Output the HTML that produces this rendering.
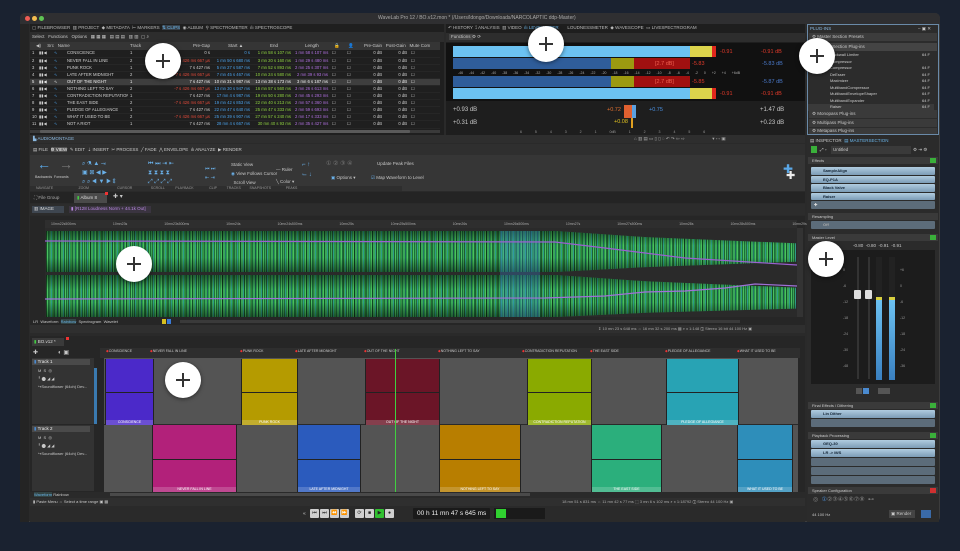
<!DOCTYPE html><html><head><meta charset="utf-8"><style>
*{margin:0;padding:0;box-sizing:border-box}
body{width:960px;height:551px;background:#1a2230;font-family:"Liberation Sans",sans-serif;color:#bbb;overflow:hidden;position:relative}
.a{position:absolute}
.t{position:absolute;font-size:4.5px;white-space:nowrap;color:#c8c8c8;line-height:6px}
.circ{position:absolute;width:36px;height:36px;border-radius:50%;background:#fff;box-shadow:0 1px 4px rgba(0,0,0,.5);z-index:9}
.circ:before{content:"";position:absolute;left:11px;top:17px;width:14px;height:1.5px;background:#333}
.circ:after{content:"";position:absolute;left:17.3px;top:11px;width:1.5px;height:14px;background:#333}
table{border-collapse:collapse;table-layout:fixed;position:absolute;left:30px;top:50px;width:410px;font-size:4.2px;color:#d0d0d0}
td{height:7.1px;padding:0 2px;white-space:nowrap;overflow:hidden;border-bottom:1px solid #262626;line-height:6px}
td.r{text-align:right}.rd{color:#e04a3a}.bl{color:#4aa0e8}.gr{color:#8ed040}.pu{color:#b070e0}
tr.sel td{background:#3e3e3e;color:#eee}
.slot{position:absolute;left:811px;width:124px;height:7.5px;background:linear-gradient(#b0cce0,#7c9cb6);border-radius:1px;font-size:4px;line-height:7.5px;color:#123;padding-left:12px;font-weight:bold}
.slot.e{background:#5c6c7a}
.hdr{position:absolute;left:808px;width:130px;height:7px;background:#3a3a3a;font-size:4px;line-height:7px;color:#ccc;padding-left:4px}
.gb{position:absolute;right:2px;top:1px;width:6px;height:5px;background:#3ab03a}
.pl{position:absolute;left:808px;width:126px;height:6.5px;font-size:4px;line-height:6.5px;color:#ccc;padding-left:22px}
.cl{position:absolute;border-left:1px solid #222;border-right:1px solid #222}
.cl b{position:absolute;left:0;right:0;top:50%;height:1px;background:#222}
.cl i{position:absolute;left:0;right:0;bottom:0;height:5px;background:rgba(255,255,255,.18);font-style:normal;font-size:3.5px;color:#fff;text-align:center;line-height:5px}
.btn{position:absolute;top:509px;width:9px;height:9px;background:#cfcfcf;border-radius:1px;font-size:5px;color:#222;text-align:center;line-height:9px}
.wv{position:absolute;background:linear-gradient(180deg,rgba(0,0,0,.45),rgba(0,0,0,0) 35%,rgba(0,0,0,0) 65%,rgba(0,0,0,.45)),repeating-linear-gradient(90deg,rgba(0,0,0,.45) 0 1px,transparent 1px 3px,rgba(0,0,0,.25) 3px 4px,transparent 4px 7px,rgba(0,0,0,.35) 7px 8px,transparent 8px 11px),repeating-linear-gradient(90deg,#2a9a48 0 1px,#4cc060 1px 2px,#1b6e38 2px 3px,#3aa858 3px 5px,#2e9c8a 5px 6px)}
</style></head><body>
<div class="a" style="left:20px;top:13px;width:920px;height:509px;background:#2a2a2a;border-radius:5px;border:1px solid #3c3c3c"></div>
<div class="a" style="left:20px;top:13px;width:920px;height:11px;background:#2f2f31;border-radius:5px 5px 0 0"></div>
<div class="a" style="left:25px;top:16px;width:5px;height:5px;border-radius:50%;background:#ee5c54"></div>
<div class="a" style="left:32px;top:16px;width:5px;height:5px;border-radius:50%;background:#f4bd4f"></div>
<div class="a" style="left:39px;top:16px;width:5px;height:5px;border-radius:50%;background:#5fc454"></div>
<div class="t" style="left:378px;top:15px;font-size:5px;color:#aaa">WaveLab Pro 12 / BO.v12.mon * (/Users/ldongo/Downloads/NARCOLAPTIC ddp-Master)</div>
<div class="a" style="left:20px;top:24px;width:9px;height:498px;background:#242424"></div>

<div class="a" style="left:30px;top:24px;width:414px;height:111px;background:#1f1f1f"></div>
<div class="t" style="left:32px;top:25px;color:#bbb">▢ FILEBROWSER &nbsp;▥ PROJECT &nbsp;◆ METADATA &nbsp;⊢ MARKERS &nbsp;<span style="color:#6ab4e8;background:#38414a">⇅ CLIPS</span> &nbsp;◉ ALBUM &nbsp;⚲ SPECTROMETER &nbsp;ılı SPECTROSCOPE</div>
<div class="a" style="left:30px;top:32px;width:414px;height:10px;background:#2d2d2d"></div>
<div class="t" style="left:32px;top:34px">Select &nbsp; Functions &nbsp; Options &nbsp; ▦ ▦ ▦ &nbsp; ▤ ▤ ▤ &nbsp; ▥ ▥ &nbsp;▢ ⌕</div>
<div class="a" style="left:30px;top:42px;width:410px;height:8px;background:#353535"></div>
<div class="t" style="left:36px;top:43px">◀) &nbsp;&nbsp;&nbsp;&nbsp;Src &nbsp; Name</div>
<div class="t" style="left:130px;top:43px">Track</div><div class="t" style="left:193px;top:43px">Pre-Gap</div><div class="t" style="left:228px;top:43px">Start ▲</div><div class="t" style="left:270px;top:43px">End</div><div class="t" style="left:305px;top:43px">Length</div><div class="t" style="left:334px;top:43px">🔒 &nbsp;&nbsp;&nbsp;&nbsp;&nbsp;&nbsp;👤</div><div class="t" style="left:364px;top:43px">Pre-Gain &nbsp;&nbsp;Post-Gain &nbsp;&nbsp;Mute Com</div>
<table>
<colgroup><col style="width:7px"><col style="width:15px"><col style="width:13px"><col style="width:63px"><col style="width:14px"><col style="width:30px"><col style="width:40px"><col style="width:40px"><col style="width:41px"><col style="width:37px"><col style="width:15px"><col style="width:15px"><col style="width:24px"><col style="width:25px"><col style="width:16px"><col style="width:15px"></colgroup>
<tr><td>1</td><td>▮▮◀</td><td class="bl">∿</td><td>CONSCIENCE</td><td>1</td><td></td><td class="r">0 s</td><td class="r bl">0 s</td><td class="r gr">1 mn 58 s 107 ms</td><td class="r pu">1 mn 58 s 107 ms</td><td>☐</td><td>☐</td><td class="r">0 dB</td><td class="r">0 dB</td><td>☐</td><td></td></tr>
<tr><td>2</td><td>▮▮◀</td><td class="bl">∿</td><td>NEVER FALL IN LINE</td><td>2</td><td></td><td class="r rd">-7 s 426 ms 667 µs</td><td class="r bl">1 mn 50 s 680 ms</td><td class="r gr">3 mn 20 s 160 ms</td><td class="r pu">1 mn 29 s 480 ms</td><td>☐</td><td>☐</td><td class="r">0 dB</td><td class="r">0 dB</td><td>☐</td><td></td></tr>
<tr><td>3</td><td>▮▮◀</td><td class="bl">∿</td><td>PUNK ROCK</td><td>1</td><td></td><td class="r">7 s 427 ms</td><td class="r bl">5 mn 27 s 587 ms</td><td class="r gr">7 mn 52 s 893 ms</td><td class="r pu">2 mn 25 s 307 ms</td><td>☐</td><td>☐</td><td class="r">0 dB</td><td class="r">0 dB</td><td>☐</td><td></td></tr>
<tr><td>4</td><td>▮▮◀</td><td class="bl">∿</td><td>LATE AFTER MIDNIGHT</td><td>2</td><td></td><td class="r rd">-7 s 426 ms 667 µs</td><td class="r bl">7 mn 45 s 467 ms</td><td class="r gr">10 mn 24 s 580 ms</td><td class="r pu">2 mn 39 s 93 ms</td><td>☐</td><td>☐</td><td class="r">0 dB</td><td class="r">0 dB</td><td>☐</td><td></td></tr>
<tr class="sel"><td>5</td><td>▮▮◀</td><td class="bl">∿</td><td>OUT OF THE NIGHT</td><td>1</td><td></td><td class="r">7 s 427 ms</td><td class="r">10 mn 31 s 987 ms</td><td class="r">13 mn 38 s 173 ms</td><td class="r">3 mn 6 s 187 ms</td><td>☐</td><td>☐</td><td class="r">0 dB</td><td class="r">0 dB</td><td>☐</td><td></td></tr>
<tr><td>6</td><td>▮▮◀</td><td class="bl">∿</td><td>NOTHING LEFT TO SAY</td><td>2</td><td></td><td class="r rd">-7 s 426 ms 667 µs</td><td class="r bl">13 mn 30 s 947 ms</td><td class="r gr">16 mn 57 s 560 ms</td><td class="r pu">3 mn 26 s 613 ms</td><td>☐</td><td>☐</td><td class="r">0 dB</td><td class="r">0 dB</td><td>☐</td><td></td></tr>
<tr><td>7</td><td>▮▮◀</td><td class="bl">∿</td><td>CONTRADICTION REPUTATION</td><td>1</td><td></td><td class="r">7 s 427 ms</td><td class="r bl">17 mn 4 s 987 ms</td><td class="r gr">19 mn 50 s 280 ms</td><td class="r pu">2 mn 45 s 293 ms</td><td>☐</td><td>☐</td><td class="r">0 dB</td><td class="r">0 dB</td><td>☐</td><td></td></tr>
<tr><td>8</td><td>▮▮◀</td><td class="bl">∿</td><td>THE EAST SIDE</td><td>2</td><td></td><td class="r rd">-7 s 426 ms 667 µs</td><td class="r bl">19 mn 42 s 853 ms</td><td class="r gr">22 mn 40 s 213 ms</td><td class="r pu">2 mn 57 s 360 ms</td><td>☐</td><td>☐</td><td class="r">0 dB</td><td class="r">0 dB</td><td>☐</td><td></td></tr>
<tr><td>9</td><td>▮▮◀</td><td class="bl">∿</td><td>PLEDGE OF ALLEGIANCE</td><td>1</td><td></td><td class="r">7 s 427 ms</td><td class="r bl">22 mn 47 s 640 ms</td><td class="r gr">25 mn 47 s 333 ms</td><td class="r pu">2 mn 59 s 693 ms</td><td>☐</td><td>☐</td><td class="r">0 dB</td><td class="r">0 dB</td><td>☐</td><td></td></tr>
<tr><td>10</td><td>▮▮◀</td><td class="bl">∿</td><td>WHAT IT USED TO BE</td><td>2</td><td></td><td class="r rd">-7 s 426 ms 667 µs</td><td class="r bl">25 mn 39 s 907 ms</td><td class="r gr">27 mn 57 s 240 ms</td><td class="r pu">2 mn 17 s 333 ms</td><td>☐</td><td>☐</td><td class="r">0 dB</td><td class="r">0 dB</td><td>☐</td><td></td></tr>
<tr><td>11</td><td>▮▮◀</td><td class="bl">∿</td><td>NOT A RIOT</td><td>1</td><td></td><td class="r">7 s 427 ms</td><td class="r bl">28 mn 4 s 667 ms</td><td class="r gr">30 mn 40 s 93 ms</td><td class="r pu">2 mn 35 s 427 ms</td><td>☐</td><td>☐</td><td class="r">0 dB</td><td class="r">0 dB</td><td>☐</td><td></td></tr>
</table>
<div class="a" style="left:30px;top:130px;width:410px;height:3px;background:#3a3a3a"></div>
<div class="a" style="left:40px;top:130px;width:370px;height:3px;background:#5a5a5a;border-radius:1px"></div>

<div class="a" style="left:446px;top:24px;width:359px;height:111px;background:#1e1e1e"></div>
<div class="t" style="left:448px;top:25px;color:#bbb">↶ HISTORY &nbsp;⟟ ANALYSIS &nbsp;▥ VIDEO &nbsp;<span style="color:#6ab4e8">ılı LEVELMETER</span> &nbsp;&nbsp;&nbsp;&nbsp;&nbsp;&nbsp;LOUDNESSMETER &nbsp;◆ WAVESCOPE &nbsp;▭ LIVESPECTROGRAM</div>
<div class="a" style="left:446px;top:33px;width:359px;height:9px;background:#2d2d2d"></div>
<div class="t" style="left:449px;top:34px;background:#444;padding:0 2px">Functions</div><div class="t" style="left:472px;top:34px">⚙ ⟳</div>
<div class="a" style="left:446px;top:43px;width:359px;height:58px;background:#111"></div>
<div class="a" style="left:453px;top:46px;width:237px;height:11px;background:#6cc2f2"></div><div class="a" style="left:690px;top:46px;width:22px;height:11px;background:#dcd44c"></div><div class="a" style="left:712px;top:46px;width:4px;height:11px;background:#e0281c"></div>
<div class="a" style="left:453px;top:58px;width:158px;height:11px;background:#2f5d9a"></div><div class="a" style="left:611px;top:58px;width:23px;height:11px;background:#9c9a10"></div><div class="a" style="left:634px;top:58px;width:56px;height:11px;background:#a01010"></div>
<div class="a" style="left:453px;top:76px;width:158px;height:11px;background:#2f5d9a"></div><div class="a" style="left:611px;top:76px;width:23px;height:11px;background:#9c9a10"></div><div class="a" style="left:634px;top:76px;width:56px;height:11px;background:#a01010"></div>
<div class="a" style="left:453px;top:88px;width:237px;height:11px;background:#6cc2f2"></div><div class="a" style="left:690px;top:88px;width:22px;height:11px;background:#dcd44c"></div><div class="a" style="left:712px;top:88px;width:4px;height:11px;background:#e0281c"></div>
<div class="t" style="left:720px;top:49px;color:#e03a2a;font-size:5.5px">-0.91</div><div class="t" style="left:761px;top:49px;color:#e03a2a;font-size:5.5px">-0.91 dB</div>
<div class="t" style="left:655px;top:61px;color:#ee6050;font-size:5.5px">[2.7 dB]</div><div class="t" style="left:692px;top:61px;color:#e03a2a;font-size:5.5px">-5.83</div><div class="t" style="left:762px;top:61px;color:#4a78c8;font-size:5.5px">-5.83 dB</div>
<div class="t" style="left:655px;top:79px;color:#ee6050;font-size:5.5px">[2.7 dB]</div><div class="t" style="left:692px;top:79px;color:#e03a2a;font-size:5.5px">-5.85</div><div class="t" style="left:762px;top:79px;color:#4a78c8;font-size:5.5px">-5.87 dB</div>
<div class="t" style="left:720px;top:91px;color:#e03a2a;font-size:5.5px">-0.91</div><div class="t" style="left:761px;top:91px;color:#e03a2a;font-size:5.5px">-0.91 dB</div>
<div class="t" style="left:458px;top:70px;font-size:3.5px;color:#aaa;word-spacing:5px">-46 -44 -42 -40 -38 -36 -34 -32 -30 -28 -26 -24 -22 -20 -18 -16 -14 -12 -10 -8 -6 -4 -2 0 +2 +4 +6dB</div>
<div class="t" style="left:453px;top:107px;font-size:6px">+0.93 dB</div><div class="t" style="left:453px;top:120px;font-size:6px">+0.31 dB</div>
<div class="t" style="left:760px;top:107px;font-size:6px">+1.47 dB</div><div class="t" style="left:760px;top:120px;font-size:6px">+0.23 dB</div>
<div class="a" style="left:624px;top:105px;width:8px;height:13px;background:#e06030"></div><div class="a" style="left:632px;top:105px;width:4px;height:13px;background:#5aa0e0"></div><div class="a" style="left:631px;top:118px;width:2px;height:10px;background:#e0a020"></div>
<div class="t" style="left:607px;top:107px;color:#e07030;font-size:5.5px">+0.72</div><div class="t" style="left:649px;top:107px;color:#4a90e0;font-size:5.5px">+0.75</div><div class="t" style="left:614px;top:119px;color:#e0c020;font-size:5.5px">+0.08</div>
<div class="t" style="left:520px;top:129px;font-size:3.5px;color:#999;word-spacing:12px">6 5 4 3 2 1 0dB 1 2 3 4 5 6</div>

<div class="a" style="left:807px;top:24px;width:132px;height:111px;background:#2c2c2c;border:1px solid #6a8aa8"></div>
<div class="t" style="left:810px;top:26px;color:#8ab8e0">PLUG-INS</div><div class="t" style="left:918px;top:26px">– ▣ ✕</div>
<div class="a" style="left:809px;top:33px;width:128px;height:8px;background:#3c3c3c"></div><div class="t" style="left:812px;top:34px">⚙ Master Section Presets</div>
<div class="a" style="left:809px;top:43px;width:128px;height:8px;background:#444"></div><div class="t" style="left:812px;top:44px">⚙ Master Section Plug-ins</div>
<div class="pl" style="top:52px">Brickwall Limiter<span style="position:absolute;right:4px">64 F</span></div>
<div class="pl" style="top:58.5px">Compressor</div>
<div class="pl" style="top:65px">Compressor<span style="position:absolute;right:4px">64 F</span></div>
<div class="pl" style="top:71.5px">DeEsser<span style="position:absolute;right:4px">64 F</span></div>
<div class="pl" style="top:78px">Maximizer<span style="position:absolute;right:4px">64 F</span></div>
<div class="pl" style="top:84.5px">MultibandCompressor<span style="position:absolute;right:4px">64 F</span></div>
<div class="pl" style="top:91px">MultibandEnvelopeShaper<span style="position:absolute;right:4px">64 F</span></div>
<div class="pl" style="top:97.5px">MultibandExpander<span style="position:absolute;right:4px">64 F</span></div>
<div class="pl" style="top:104px;background:#3a3a3a">Raiser<span style="position:absolute;right:4px">64 F</span></div>
<div class="a" style="left:809px;top:110px;width:128px;height:8px;background:#3a3a3a"></div><div class="t" style="left:812px;top:111px">⚙ Monopass Plug-ins</div>
<div class="a" style="left:809px;top:119px;width:128px;height:8px;background:#3a3a3a"></div><div class="t" style="left:812px;top:120px">⚙ Multipass Plug-ins</div>
<div class="a" style="left:809px;top:128px;width:128px;height:6px;background:#3a3a3a"></div><div class="t" style="left:812px;top:128px">⚙ Metapass Plug-ins</div>

<div class="a" style="left:30px;top:135px;width:775px;height:8px;background:#2e2e2e"></div>
<div class="t" style="left:33px;top:136px;color:#8ab8e0">▙ AUDIOMONTAGE</div>
<div class="t" style="left:634px;top:136px;color:#aaa">⌂ ▥ ▤ ▭ ▯ ▯ ◌ ↶ ↷ ⇦ ⇨ &nbsp;&nbsp;&nbsp;&nbsp;&nbsp;&nbsp;&nbsp;&nbsp;&nbsp;&nbsp;&nbsp;&nbsp;&nbsp;&nbsp;&nbsp;&nbsp;&nbsp;&nbsp;&nbsp;&nbsp;&nbsp;▾ ▫ ▫ ▣</div>
<div class="a" style="left:30px;top:144px;width:775px;height:11px;background:#2f2f2f"></div>
<div class="t" style="left:33px;top:147px">▤ FILE &nbsp;<span style="background:#505050;color:#fff">⚙ VIEW</span> &nbsp;✎ EDIT &nbsp;⇣ INSERT &nbsp;✂ PROCESS &nbsp;╱ FADE &nbsp;⋀ ENVELOPE &nbsp;ılı ANALYZE &nbsp;▶ RENDER</div>
<div class="a" style="left:30px;top:155px;width:775px;height:36px;background:#363636"></div>
<div class="a" style="left:30px;top:186px;width:372px;height:5px;background:#2e2e2e"></div>
<div class="t" style="left:36px;top:185px;font-size:3.5px;color:#999">NAVIGATE &nbsp;&nbsp;&nbsp;&nbsp;&nbsp;&nbsp;&nbsp;&nbsp;&nbsp;&nbsp;&nbsp;&nbsp;&nbsp;&nbsp;&nbsp;&nbsp;&nbsp;&nbsp;&nbsp;&nbsp;&nbsp;&nbsp;&nbsp;&nbsp;&nbsp;ZOOM &nbsp;&nbsp;&nbsp;&nbsp;&nbsp;&nbsp;&nbsp;&nbsp;&nbsp;&nbsp;&nbsp;&nbsp;&nbsp;&nbsp;&nbsp;&nbsp;&nbsp;&nbsp;&nbsp;&nbsp;&nbsp;&nbsp;&nbsp;&nbsp;&nbsp;&nbsp;&nbsp;&nbsp;CURSOR &nbsp;&nbsp;&nbsp;&nbsp;&nbsp;&nbsp;&nbsp;&nbsp;&nbsp;&nbsp;&nbsp;&nbsp;&nbsp;&nbsp;&nbsp;&nbsp;&nbsp;&nbsp;SCROLL &nbsp;&nbsp;&nbsp;&nbsp;&nbsp;&nbsp;&nbsp;&nbsp;&nbsp;&nbsp;PLAYBACK &nbsp;&nbsp;&nbsp;&nbsp;&nbsp;&nbsp;&nbsp;&nbsp;&nbsp;&nbsp;&nbsp;&nbsp;&nbsp;&nbsp;&nbsp;CLIP &nbsp;&nbsp;&nbsp;&nbsp;&nbsp;&nbsp;&nbsp;&nbsp;&nbsp;TRACKS &nbsp;&nbsp;&nbsp;&nbsp;&nbsp;&nbsp;&nbsp;&nbsp;SNAPSHOTS &nbsp;&nbsp;&nbsp;&nbsp;&nbsp;&nbsp;&nbsp;&nbsp;&nbsp;&nbsp;&nbsp;&nbsp;&nbsp;&nbsp;PEAKS</div>
<div class="t" style="left:37px;top:157px;font-size:14px;color:#5aa8e8;line-height:14px">←</div><div class="t" style="left:59px;top:157px;font-size:14px;color:#777;line-height:14px">→</div>
<div class="t" style="left:35px;top:174px;font-size:3.5px">Backwards &nbsp;Forwards</div>
<div class="t" style="left:82px;top:160px;font-size:6px;color:#6ab0e8;line-height:9px">⌕ ⚗ ▲ ⇥<br>▣ ⊠ ◀ ▶<br>⌕ ⌕ ◀ ▼ ▶ ⇕</div>
<div class="t" style="left:148px;top:160px;font-size:6px;color:#6ab0e8;line-height:9px">⏮ ⏭ ⇥ ⇤<br>⧗ ⧗ ⧗ ⧗<br>⤢ ⤢ ⤢ ⤢</div>
<div class="t" style="left:205px;top:165px;font-size:5px;color:#6ab0e8;line-height:9px">⏮ ⏭<br>⇤ ⇥</div>
<div class="t" style="left:231px;top:160px;line-height:9px">Static View<br><span style="color:#6ab0e8">◉</span> View Follows Cursor<br>&nbsp;&nbsp;Scroll View</div>
<div class="t" style="left:276px;top:164px;line-height:12px">— Ruler<br>╲ Color ▾</div>
<div class="t" style="left:302px;top:160px;font-size:6px;color:#6ab0e8;line-height:10px">⌐ ↑<br>⌙ ↓</div>
<div class="t" style="left:326px;top:161px;color:#777;font-size:6px">① ② ③ ④</div>
<div class="t" style="left:331px;top:175px"><span style="color:#6ab0e8">▣</span> Options ▾</div>
<div class="t" style="left:377px;top:161px">Update Peak Files</div>
<div class="t" style="left:371px;top:175px"><span style="color:#6ab0e8">☑</span> Map Waveform to Level</div>
<div class="t" style="left:783px;top:163px;font-size:12px;color:#5aa8e8;line-height:12px">✚</div><div class="t" style="left:786px;top:171px;font-size:11px;color:#eee;line-height:11px">✚</div>
<div class="a" style="left:30px;top:192px;width:775px;height:11px;background:#242424"></div>
<div class="t" style="left:34px;top:195px;color:#aaa">⛶ File Group</div>
<div class="a" style="left:74px;top:193px;width:33px;height:10px;background:#4a4a4a"></div><div class="t" style="left:77px;top:195px;color:#ddd"><span style="color:#4c4">▮</span> Album 8</div>
<div class="a" style="left:105px;top:192px;width:3px;height:3px;background:#e33"></div>
<div class="t" style="left:113px;top:194px;font-size:6px">✚ ▾</div>
<div class="a" style="left:30px;top:204px;width:775px;height:11px;background:#2c2c2c"></div>
<div class="a" style="left:32px;top:206px;width:32px;height:7px;background:#3e4650"></div><div class="t" style="left:34px;top:206px;color:#ddd">▥ IMAGE</div>
<div class="a" style="left:69px;top:206px;width:82px;height:7px;background:#3a3440"></div><div class="t" style="left:71px;top:206px;color:#b888e0">▮ [R128 Loudness Norm + 44.1k Out]</div>
<div class="a" style="left:30px;top:216px;width:775px;height:102px;background:#262626"></div>
<div class="a" style="left:45px;top:220px;width:752px;height:8px;background:#2e2e2e"></div>
<div class="t" style="left:51px;top:221px;font-size:3.5px;color:#aaa;word-spacing:36px">10mn22s500ms 10mn23s 10mn23s500ms 10mn24s 10mn24s500ms 10mn25s 10mn25s500ms 10mn26s 10mn26s500ms 10mn27s 10mn27s500ms 10mn28s 10mn28s500ms 10mn29s</div>
<div class="a" style="left:45px;top:228px;width:752px;height:89px;background:#2a2a2a"></div>
<div class="wv" style="left:46px;top:231px;width:750px;height:41px;clip-path:polygon(0 0,68% 0,80% 15%,100% 30%,100% 75%,80% 88%,68% 100%,0 100%)"></div>
<div class="wv" style="left:46px;top:275px;width:750px;height:42px;clip-path:polygon(0 0,68% 0,80% 15%,100% 30%,100% 80%,80% 90%,68% 100%,0 100%)"></div>
<div class="a" style="left:500px;top:231px;width:40px;height:86px;background:rgba(60,140,220,.3)"></div>
<svg class="a" style="left:45px;top:228px" width="752" height="90"><polyline points="0,13 510,14 560,20 640,30 752,37" fill="none" stroke="#9a60d0" stroke-width="1.2"/><polyline points="0,71 500,70 560,68 600,64 640,63 680,60 710,56 752,58" fill="none" stroke="#a070d8" stroke-width="1.2"/></svg>
<div class="a" style="left:797px;top:228px;width:6px;height:89px;background:#333"></div>
<div class="a" style="left:30px;top:318px;width:775px;height:7px;background:#262626"></div>
<div class="t" style="left:33px;top:319px;font-size:4px">LR &nbsp;Waveform &nbsp;<span style="color:#6ab4e8;background:#344">Rainbow</span> &nbsp;Spectrogram &nbsp;Wavelet</div>
<div class="a" style="left:162px;top:319px;width:4px;height:5px;background:#d8c020"></div><div class="a" style="left:167px;top:319px;width:4px;height:5px;background:#3a7ad8"></div>
<div class="a" style="left:180px;top:320px;width:560px;height:3px;background:#3a3a3a"></div>
<div class="a" style="left:30px;top:325px;width:775px;height:8px;background:#2f2f2f"></div>
<div class="t" style="left:598px;top:326px;font-size:4px;color:#aaa">⇕ 10 mn 23 s 648 ms ⇔ 16 mn 32 s 200 ms ▦ ⌕ x 1:148 ⓘ Stereo 16 bit 44 100 Hz ▣</div>

<div class="a" style="left:807px;top:136px;width:132px;height:386px;background:#2b2b2b"></div>
<div class="t" style="left:810px;top:138px">▤ INSPECTOR &nbsp;<span style="color:#6ab4e8">▤ MASTERSECTION</span></div>
<div class="a" style="left:811px;top:146px;width:6px;height:7px;background:#3ab03a"></div>
<div class="t" style="left:820px;top:147px">⤢ ▫</div>
<div class="a" style="left:831px;top:146px;width:80px;height:8px;background:#3a3a3a"></div><div class="t" style="left:833px;top:147px">Untitled</div>
<div class="t" style="left:913px;top:147px">⚙ ⇥ ⚙</div>
<div class="hdr" style="top:157px">Effects<span class="gb"></span></div>
<div class="slot" style="top:167px">SampleAlign</div>
<div class="slot" style="top:175.5px">EQ-P1A</div>
<div class="slot" style="top:184px">Black Valve</div>
<div class="slot" style="top:192.5px">Raiser</div>
<div class="slot e" style="top:201px;color:#ddd;padding-left:3px">✚</div>
<div class="hdr" style="top:213px">Resampling</div>
<div class="slot e" style="top:221px;color:#aaa">Off</div>
<div class="hdr" style="top:234px">Master Level<span class="gb"></span></div>
<div class="t" style="left:853px;top:243px">-0.80 &nbsp;-0.80 &nbsp;-0.91 &nbsp;-0.91</div>
<div class="a" style="left:811px;top:250px;width:124px;height:134px;background:#1c1c1c"></div>
<div class="a" style="left:857px;top:257px;width:2px;height:122px;background:#333"></div><div class="a" style="left:868px;top:257px;width:2px;height:122px;background:#333"></div>
<div class="a" style="left:854px;top:290px;width:7px;height:9px;background:#ddd;border-radius:1px"></div><div class="a" style="left:865px;top:290px;width:7px;height:9px;background:#ddd;border-radius:1px"></div>
<div class="a" style="left:876px;top:257px;width:6px;height:122px;background:#222"></div><div class="a" style="left:889px;top:257px;width:6px;height:122px;background:#222"></div>
<div class="a" style="left:876px;top:297px;width:6px;height:3px;background:#d8d040"></div><div class="a" style="left:889px;top:297px;width:6px;height:3px;background:#d8d040"></div>
<div class="a" style="left:876px;top:300px;width:6px;height:80px;background:linear-gradient(#6cc2f2,#3a80c0)"></div><div class="a" style="left:889px;top:300px;width:6px;height:80px;background:linear-gradient(#6cc2f2,#3a80c0)"></div>
<div class="t" style="left:843px;top:262px;font-size:3.5px;color:#999;line-height:16px">0<br>-6<br>-12<br>-18<br>-24<br>-30<br>-48</div>
<div class="t" style="left:900px;top:262px;font-size:3.5px;color:#999;line-height:16px">+6<br>0<br>-6<br>-12<br>-18<br>-24<br>-36</div>
<div class="a" style="left:856px;top:388px;width:6px;height:6px;background:#555"></div><div class="a" style="left:863px;top:388px;width:6px;height:6px;background:#4a8ad0"></div>
<div class="a" style="left:878px;top:388px;width:12px;height:6px;background:#555"></div>
<div class="hdr" style="top:402px">Final Effects / Dithering<span class="gb"></span></div>
<div class="slot" style="top:410px">Lin Dither</div>
<div class="slot e" style="top:419px"></div>
<div class="hdr" style="top:432px">Playback Processing<span class="gb"></span></div>
<div class="slot" style="top:440px">GEQ-30</div>
<div class="slot" style="top:449px">LR -&gt; M/S</div>
<div class="slot e" style="top:458px"></div><div class="slot e" style="top:467px"></div><div class="slot e" style="top:476px"></div>
<div class="hdr" style="top:487px">Speaker Configuration<span class="gb" style="background:#d03030"></span></div>
<div class="t" style="left:813px;top:497px;font-size:6px;color:#888">◎ &nbsp;<span style="color:#4a8ad0">①</span>②③④⑤⑥⑦⑧ &nbsp;⊷</div>
<div class="t" style="left:812px;top:512px;font-size:4px">44 100 Hz</div>
<div class="a" style="left:889px;top:510px;width:26px;height:8px;background:#444"></div><div class="t" style="left:891px;top:511px">▣ Render</div>
<div class="a" style="left:921px;top:510px;width:10px;height:8px;background:#3a6aa8"></div>

<div class="a" style="left:30px;top:336px;width:775px;height:170px;background:#262626"></div>
<div class="a" style="left:32px;top:338px;width:32px;height:8px;background:#3a3a3a"></div><div class="t" style="left:34px;top:339px;color:#ddd"><span style="color:#4c4">▮</span> BO.v12 *</div>
<div class="a" style="left:66px;top:337px;width:3px;height:3px;background:#e33"></div>
<div class="a" style="left:100px;top:348px;width:700px;height:10px;background:#2e2e2e"></div>
<div class="t" style="left:106px;top:348px;font-size:3.5px;color:#ccc"><span style="color:#e33">◆</span>CONSCIENCE</div>
<div class="t" style="left:150px;top:348px;font-size:3.5px;color:#ccc"><span style="color:#e33">◆</span>NEVER FALL IN LINE</div>
<div class="t" style="left:240px;top:348px;font-size:3.5px;color:#ccc"><span style="color:#e33">◆</span>PUNK ROCK</div>
<div class="t" style="left:295px;top:348px;font-size:3.5px;color:#ccc"><span style="color:#e33">◆</span>LATE AFTER MIDNIGHT</div>
<div class="t" style="left:364px;top:348px;font-size:3.5px;color:#ccc"><span style="color:#e33">◆</span>OUT OF THE NIGHT</div>
<div class="t" style="left:438px;top:348px;font-size:3.5px;color:#ccc"><span style="color:#e33">◆</span>NOTHING LEFT TO SAY</div>
<div class="t" style="left:522px;top:348px;font-size:3.5px;color:#ccc"><span style="color:#e33">◆</span>CONTRADICTION REPUTATION</div>
<div class="t" style="left:590px;top:348px;font-size:3.5px;color:#ccc"><span style="color:#e33">◆</span>THE EAST SIDE</div>
<div class="t" style="left:665px;top:348px;font-size:3.5px;color:#ccc"><span style="color:#e33">◆</span>PLEDGE OF ALLEGIANCE</div>
<div class="t" style="left:737px;top:348px;font-size:3.5px;color:#ccc"><span style="color:#e33">◆</span>WHAT IT USED TO BE</div>
<div class="t" style="left:33px;top:350px;font-size:6px">✚ &nbsp;&nbsp;&nbsp;&nbsp;&nbsp;&nbsp;&nbsp;&nbsp;&nbsp;&nbsp;&nbsp;◐ ▣</div>
<div class="a" style="left:32px;top:358px;width:62px;height:66px;background:#333"></div>
<div class="a" style="left:32px;top:359px;width:58px;height:6px;background:#4a4a4a"></div><div class="t" style="left:34px;top:359px;color:#eee"><span style="color:#4a8ad0">▮</span> Track 1</div>
<div class="t" style="left:38px;top:367px;font-size:4px;line-height:8px">M &nbsp;S &nbsp;◎<br>╹ ⬤ ◢ ◢<br>↪Soundflower (64ch) Dev...</div>
<div class="a" style="left:94px;top:368px;width:3px;height:56px;background:#3a7ab0"></div>
<div class="a" style="left:32px;top:425px;width:62px;height:66px;background:#333"></div>
<div class="a" style="left:32px;top:426px;width:58px;height:6px;background:#4a4a4a"></div><div class="t" style="left:34px;top:426px;color:#eee"><span style="color:#4a8ad0">▮</span> Track 2</div>
<div class="t" style="left:38px;top:434px;font-size:4px;line-height:8px">M &nbsp;S &nbsp;◎<br>╹ ⬤ ◢ ◢<br>↪Soundflower (64ch) Dev...</div>
<div class="a" style="left:104px;top:358px;width:694px;height:134px;background:#545454"></div>
<div class="a" style="left:104px;top:424px;width:694px;height:1px;background:#2a2a2a"></div>
<div class="cl" style="left:105px;top:359px;width:49px;height:66px;background:#4b29c9"><b></b><i>CONSCIENCE</i></div>
<div class="cl" style="left:241px;top:359px;width:57px;height:66px;background:#b59b00"><b></b><i>PUNK ROCK</i></div>
<div class="cl" style="left:365px;top:359px;width:75px;height:66px;background:#6b1527"><b></b><i>OUT OF THE NIGHT</i></div>
<div class="cl" style="left:527px;top:359px;width:65px;height:66px;background:#8aaa00"><b></b><i>CONTRADICTION REPUTATION</i></div>
<div class="cl" style="left:666px;top:359px;width:73px;height:66px;background:#28a3b4"><b></b><i>PLEDGE OF ALLEGIANCE</i></div>
<div class="cl" style="left:152px;top:425px;width:85px;height:67px;background:#b2217a"><b></b><i>NEVER FALL IN LINE</i></div>
<div class="cl" style="left:297px;top:425px;width:64px;height:67px;background:#2b5bbd"><b></b><i>LATE AFTER MIDNIGHT</i></div>
<div class="cl" style="left:439px;top:425px;width:82px;height:67px;background:#b87e00"><b></b><i>NOTHING LEFT TO SAY</i></div>
<div class="cl" style="left:591px;top:425px;width:71px;height:67px;background:#2baf7c"><b></b><i>THE EAST SIDE</i></div>
<div class="cl" style="left:737px;top:425px;width:56px;height:67px;background:#2e8eba"><b></b><i>WHAT IT USED TO BE</i></div>
<div class="a" style="left:395px;top:349px;width:1px;height:143px;background:#40d040"></div>
<div class="a" style="left:30px;top:492px;width:775px;height:6px;background:#2a2a2a"></div>
<div class="t" style="left:34px;top:492px;font-size:4px"><span style="color:#6ab4e8;background:#344">Waveform</span> Rainbow</div>
<div class="a" style="left:110px;top:493px;width:420px;height:3px;background:#4a4a4a"></div>
<div class="a" style="left:30px;top:498px;width:775px;height:8px;background:#2f2f2f"></div>
<div class="t" style="left:33px;top:499px;font-size:4px">▮ Paste Menu ⇔ Select a time range ▣ ▦</div>
<div class="t" style="left:562px;top:499px;font-size:4px;color:#aaa">18 mn 51 s 831 ms ⇔ 11 mn 42 s 77 ms ⬚ 3 mn 6 s 102 ms ⌕ x 1:18792 ⓘ Stereo 44 100 Hz ▣</div>
<div class="a" style="left:30px;top:506px;width:775px;height:16px;background:#2a2a2a"></div>
<div class="t" style="left:303px;top:511px;font-size:5px">«</div>
<div class="btn" style="left:310px">⏮</div><div class="btn" style="left:320px">⏭</div><div class="btn" style="left:330px">⏪</div><div class="btn" style="left:340px">⏩</div><div class="btn" style="left:355px">⟳</div><div class="btn" style="left:365px">■</div><div class="btn" style="left:375px;background:#30c030">▶</div><div class="btn" style="left:385px">●</div>
<div class="a" style="left:413px;top:508px;width:77px;height:11px;background:#1a1a1a;border-radius:1px"></div>
<div class="t" style="left:417px;top:510px;font-size:6.5px;color:#eee;line-height:7px">00 h 11 mn 47 s 645 ms</div>
<div class="a" style="left:494px;top:508px;width:51px;height:11px;background:#1a1a1a"></div>
<div class="a" style="left:496px;top:509px;width:10px;height:9px;background:#30d030"></div>

<div class="circ" style="left:145px;top:43px"></div>
<div class="circ" style="left:528px;top:26px"></div>
<div class="circ" style="left:799px;top:38px"></div>
<div class="circ" style="left:116px;top:246px"></div>
<div class="circ" style="left:808px;top:241px"></div>
<div class="circ" style="left:165px;top:362px"></div>
</body></html>
